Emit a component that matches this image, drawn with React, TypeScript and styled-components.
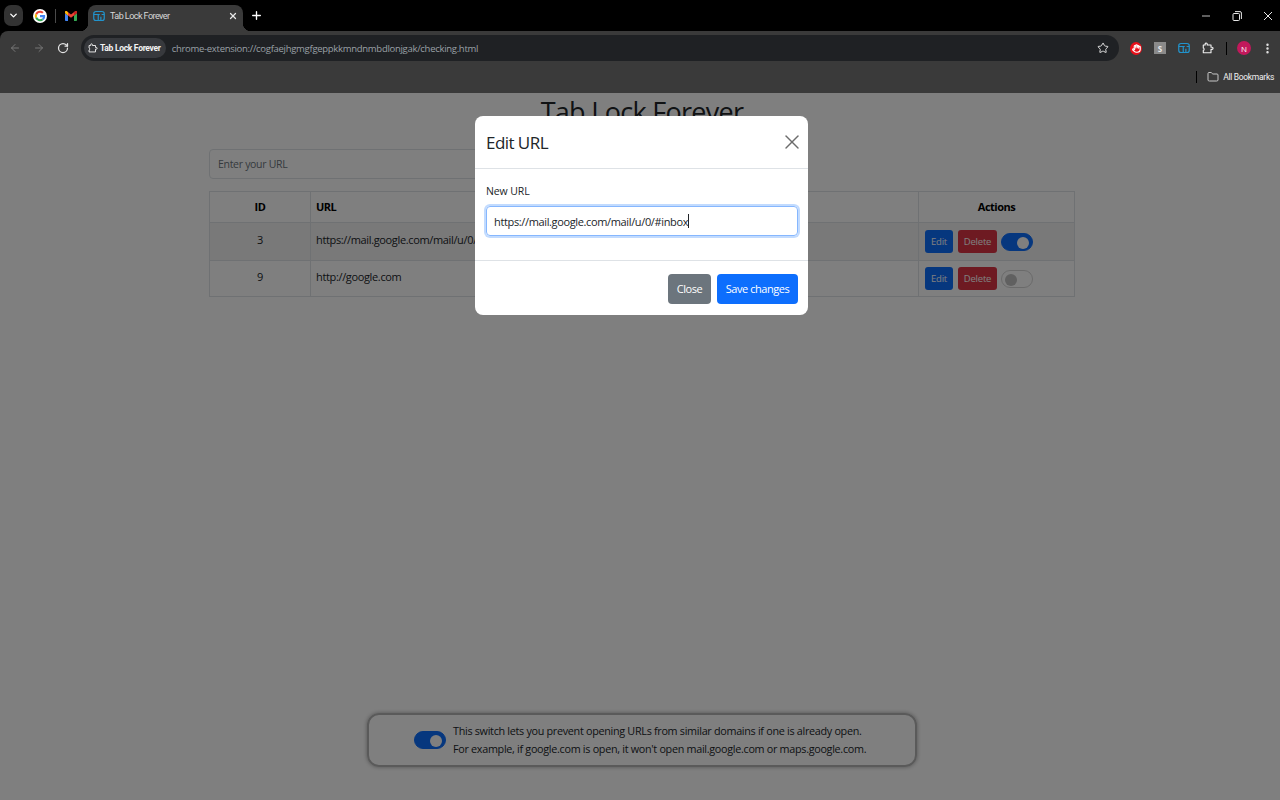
import React from 'react';
import styled, { createGlobalStyle } from 'styled-components';
import { ArrowLeft, ArrowRight, ChevronDown, Folder, Hand, MoreVertical, Plus, RotateCw, Star, X } from 'lucide-react';

const GlobalStyle = createGlobalStyle`
  html, body { margin: 0; padding: 0; height: 100%; }
  body { background: #000; font-family: "Open Sans", "Noto Sans", "Liberation Sans", sans-serif; color: #212529; overflow: hidden; }
  * { box-sizing: border-box; }
`;

const Shell = styled.div`
  width: 1280px;
  height: 800px;
  background: #000;
  display: flex;
  flex-direction: column;
`;

const TabStrip = styled.div`
  height: 31px;
  flex-shrink: 0;
  background: #000;
  display: flex;
  align-items: center;
  padding-left: 4px;
  color: #fff;
`;

const TabSearch = styled.div`
  width: 19px;
  height: 21px;
  border-radius: 7px;
  background: #333;
  display: flex;
  align-items: center;
  justify-content: center;
`;

const PinnedTab = styled.div<{ $flush?: boolean }>`
  width: 16px;
  height: 16px;
  margin-left: ${p => (p.$flush ? 0 : 9)}px;
  display: flex;
  align-items: center;
  justify-content: center;
`;

const TabDivider = styled.div`
  width: 1px;
  height: 14px;
  margin: 0 7px;
  background: #4a4a4a;
`;

const ActiveTab = styled.div`
  position: relative;
  width: 155px;
  height: 26px;
  margin: 5px 0 0 9px;
  padding: 0 5px 4px;
  border-radius: 8px 8px 0 0;
  background: #3a3a3a;
  display: flex;
  align-items: center;
  gap: 5px;

  &::before,
  &::after {
    content: '';
    position: absolute;
    bottom: 0;
    width: 8px;
    height: 8px;
  }
  &::before {
    left: -8px;
    background: radial-gradient(circle at 0 0, #000 8px, #3a3a3a 8.5px);
  }
  &::after {
    right: -8px;
    background: radial-gradient(circle at 100% 0, #000 8px, #3a3a3a 8.5px);
  }
`;

const TabTitle = styled.span`
  flex: 1;
  font-family: Roboto, "Open Sans", sans-serif;
  font-size: 9px;
  letter-spacing: -0.55px;
  color: #d8d8d8;
  white-space: nowrap;
`;

const NewTab = styled.div`
  margin-left: 7px;
  display: flex;
`;

const WindowControls = styled.div`
  margin-left: auto;
  display: flex;
  align-items: center;
  gap: 21px;
  padding-right: 7px;
`;

const Toolbar = styled.div`
  height: 34px;
  flex-shrink: 0;
  background: #3a3a3a;
  border-radius: 8px 0 0 0;
  display: flex;
  align-items: center;
  padding-left: 9px;
`;

const NavButton = styled.div<{ $dim?: boolean }>`
  width: 12px;
  height: 12px;
  margin-right: 12px;
  display: flex;
  color: ${p => (p.$dim ? '#777' : '#e6e6e6')};
`;

const Omnibox = styled.div`
  width: 1038px;
  height: 26px;
  padding: 0 10px 0 3px;
  border-radius: 13px;
  background: #1f2124;
  display: flex;
  align-items: center;
`;

const OriginChip = styled.div`
  height: 20px;
  padding: 0 5px 0 4px;
  border-radius: 10px;
  background: #37393d;
  display: flex;
  align-items: center;
  gap: 2px;
  color: #f2f2f2;
  font-family: Roboto, "Open Sans", sans-serif;
  font-size: 8.5px;
  font-weight: 700;
  letter-spacing: -0.3px;
  white-space: nowrap;
`;

const UrlText = styled.span`
  margin-left: 6px;
  flex: 1;
  font-size: 9.5px;
  letter-spacing: -0.29px;
  color: #9aa0a6;
  white-space: nowrap;
`;

const ExtensionTray = styled.div`
  display: flex;
  align-items: center;
  margin-left: 11px;
  gap: 12px;
`;

const StopIcon = styled.div`
  width: 12px;
  height: 13px;
  border-radius: 50%;
  background: #e8101a;
  display: flex;
  align-items: center;
  justify-content: center;
  color: #fff;
`;

const GreyBadge = styled.div`
  width: 12px;
  height: 12px;
  background: #8a8a8a;
  color: #e8e8e8;
  font-size: 8px;
  font-weight: 700;
  display: flex;
  align-items: center;
  justify-content: center;
`;

const TrayDivider = styled.div`
  width: 1px;
  height: 13px;
  background: #000;
`;

const Avatar = styled.div`
  width: 14px;
  height: 14px;
  margin: 0 -2px;
  border-radius: 50%;
  background: #c2185b;
  color: #fff;
  font-size: 8px;
  display: flex;
  align-items: center;
  justify-content: center;
`;

const BookmarkBar = styled.div`
  height: 28px;
  flex-shrink: 0;
  background: #3a3a3a;
  display: flex;
  align-items: center;
  justify-content: flex-end;
  padding: 0 6px 4px 0;
  gap: 4px;
  color: #f0f0f0;
  font-family: Roboto, "Open Sans", sans-serif;
  font-size: 8.5px;
  letter-spacing: -0.3px;
`;

const BookmarkDivider = styled.div`
  width: 1px;
  height: 12px;
  margin-right: 6px;
  background: #000;
`;

const Page = styled.main`
  position: relative;
  flex: 1;
  padding-left: 4px;
  display: flex;
  flex-direction: column;
  align-items: center;
  background: #fff;
`;

const Title = styled.h1`
  margin: 0;
  height: 56px;
  font-size: 27px;
  line-height: 38px;
  font-weight: 500;
  letter-spacing: -0.7px;
`;

const FormRow = styled.div`
  width: 866px;
  display: flex;
`;

const UrlInput = styled.input`
  width: 540px;
  height: 30px;
  padding: 0 8px;
  border: 1px solid #dee2e6;
  border-radius: 4px;
  font: inherit;
  font-size: 10.5px;
  letter-spacing: -0.3px;
  outline: none;
  &::placeholder { color: #6c757d; }
`;

const Table = styled.table`
  width: 866px;
  margin-top: 12px;
  border-collapse: collapse;
  table-layout: fixed;
  font-size: 11px;
  letter-spacing: -0.35px;
`;

const Col = styled.col<{ $width?: number }>`
  width: ${p => (p.$width ? `${p.$width}px` : 'auto')};
`;

const Th = styled.th<{ $left?: boolean }>`
  height: 31px;
  padding: 0 ${p => (p.$left ? 5 : 6)}px 1px;
  border: 1px solid #dee2e6;
  text-align: ${p => (p.$left ? 'left' : 'center')};
  color: #000;
  font-weight: 700;
  letter-spacing: -0.5px;
`;

const Row = styled.tr<{ $striped?: boolean }>`
  background: ${p => (p.$striped ? '#f2f2f2' : '#fff')};
`;

const Td = styled.td<{ $left?: boolean; $tall?: boolean; $text?: boolean }>`
  height: ${p => (p.$tall ? 38 : 36)}px;
  padding: 0 ${p => (p.$left ? 5 : 6)}px ${p => (p.$text ? 4 : 0)}px;
  border: 1px solid #dee2e6;
  text-align: ${p => (p.$left ? 'left' : 'center')};
  white-space: nowrap;
  overflow: hidden;
`;

const Actions = styled.div`
  display: flex;
  align-items: center;
  gap: 5px;
`;

const SmallButton = styled.button<{ $danger?: boolean }>`
  height: 23px;
  width: ${p => (p.$danger ? 39 : 28)}px;
  padding: 0;
  border: none;
  border-radius: 3px;
  background: ${p => (p.$danger ? '#dc3545' : '#0d6efd')};
  color: #fff;
  font: inherit;
  font-size: 9.5px;
  letter-spacing: -0.2px;
`;

const Switch = styled.span<{ $on?: boolean }>`
  width: 32px;
  height: 18px;
  margin-left: -1px;
  padding: 3px;
  border-radius: 9px;
  border: 1px solid ${p => (p.$on ? '#0d6efd' : '#d5d5d5')};
  background: ${p => (p.$on ? '#0d6efd' : '#fff')};
  display: flex;
  justify-content: ${p => (p.$on ? 'flex-end' : 'flex-start')};
  flex-shrink: 0;
  &::after {
    content: '';
    width: 12px;
    height: 12px;
    border-radius: 50%;
    background: ${p => (p.$on ? '#fff' : '#c0c0c0')};
  }
`;

const Notice = styled.div`
  margin-top: auto;
  margin-bottom: 33px;
  width: 550px;
  height: 54px;
  border: 2px solid #b5b5b5;
  border-radius: 12px;
  box-shadow: 0 0 4px rgba(0, 0, 0, 0.35);
  display: flex;
  align-items: center;
  padding-left: 46px;
  gap: 7px;
  font-size: 10.8px;
  letter-spacing: -0.3px;
  line-height: 18px;
`;

const Backdrop = styled.div`
  position: absolute;
  inset: 0;
  background: rgba(0, 0, 0, 0.5);
`;

const Modal = styled.div`
  position: absolute;
  top: 23px;
  left: 475px;
  width: 333px;
  height: 199px;
  border-radius: 8px;
  background: #fff;
  display: flex;
  flex-direction: column;
`;

const ModalHeader = styled.div`
  height: 53px;
  padding: 0 4px 0 11px;
  border-bottom: 1px solid #dee2e6;
  display: flex;
  align-items: center;
  justify-content: space-between;
  font-size: 17px;
  font-weight: 500;
  letter-spacing: -0.55px;
`;

const ModalBody = styled.div`
  height: 92px;
  padding: 15px 10px 0 11px;
  border-bottom: 1px solid #dee2e6;
  font-size: 10.5px;
  letter-spacing: -0.1px;
`;

const FieldLabel = styled.div`
  margin-bottom: 8px;
  line-height: 14px;
`;

const FocusField = styled.div`
  height: 30px;
  padding: 0 7px;
  border: 1px solid #86b7fe;
  border-radius: 4px;
  box-shadow: 0 0 0 2px rgba(13, 110, 253, 0.25);
  display: flex;
  align-items: center;
  font-size: 11px;
  letter-spacing: -0.36px;
  white-space: nowrap;
`;

const Caret = styled.span`
  width: 1px;
  height: 14px;
  background: #212529;
`;

const ModalFooter = styled.div`
  flex: 1;
  padding: 1px 10px 0 0;
  display: flex;
  align-items: center;
  justify-content: flex-end;
  gap: 6px;
`;

const FooterButton = styled.button<{ $primary?: boolean }>`
  height: 30px;
  width: ${p => (p.$primary ? 81 : 43)}px;
  padding: 0;
  border: none;
  border-radius: 4px;
  background: ${p => (p.$primary ? '#0d6efd' : '#6c757d')};
  color: #fff;
  font: inherit;
  font-size: 11px;
  letter-spacing: -0.45px;
`;

const GoogleIcon = () => (
  <svg width="14" height="14" viewBox="0 0 48 48">
    <circle cx="24" cy="24" r="24" fill="#fff" />
    <path fill="#ea4335" d="M24 13c3 0 5.400 1 7.300 2.800l5-5C33.300 7.900 29 6 24 6 17 6 11 10 8.100 15.900l5.900 4.500C15.400 16 19.300 13 24 13z" />
    <path fill="#4285f4" d="M41.600 24.500c0-1.300-.1-2.500-.3-3.600H24v7h9.900c-.4 2.300-1.700 4.200-3.700 5.500l5.700 4.400c3.400-3.100 5.700-7.700 5.700-13.300z" />
    <path fill="#fbbc05" d="M14 27.600c-.4-1.100-.6-2.300-.6-3.600s.2-2.500.6-3.600l-5.900-4.500C6.800 18.300 6 21 6 24s.8 5.700 2.100 8.100z" />
    <path fill="#34a853" d="M24 42c4.900 0 9-1.600 11.900-4.400l-5.700-4.400c-1.600 1.100-3.700 1.700-6.200 1.700-4.700 0-8.600-3-10-7.300l-5.900 4.500C11 37.900 17 42 24 42z" />
  </svg>
);

const GmailIcon = () => (
  <svg width="12" height="10" viewBox="0 0 24 20">
    <path fill="#4285f4" d="M0 4v14.500C0 19.300.7 20 1.500 20H6V9z" />
    <path fill="#34a853" d="M24 4v14.500c0 .8-.7 1.500-1.500 1.500H18V9z" />
    <path fill="#ea4335" d="M0 2.500C0 .5 2.200-.7 3.800.5L12 7l8.200-6.500C21.800-.7 24 .5 24 2.500V4l-6 5-6 4.500L6 9 0 4z" />
    <path fill="#fbbc05" d="M0 2.500V4l6 5V3L3.800.5C2.200-.7 0 .5 0 2.500z" />
    <path fill="#c5221f" d="M18 3v6l6-5V2.500c0-2-2.200-3.200-3.800-2z" />
  </svg>
);

const LockFavicon = () => (
  <svg width="12" height="12" viewBox="0 0 16 16" fill="none" stroke="#2293cc" strokeWidth="1.600">
    <rect x="1" y="2" width="14" height="12" rx="3" />
    <path d="M1 6h8M11.500 6h3.500M7 6v8M10.500 9v5" />
  </svg>
);

const ExtensionIcon = ({ size }: { size: number }) => (
  <svg width={size} height={size} viewBox="0 0 14 14" fill="none" stroke="#f0f0f0" strokeWidth="1.300" strokeLinejoin="round">
    <path d="M1.500 3.500h2.200V2.300a1.200 1.200 0 0 1 2.400 0v1.200h4.400v2.700h1.200a1.200 1.200 0 0 1 0 2.400h-1.200v3.900H1.500V9.800c1.300-.2 1.300-2.600 0-2.800z" />
  </svg>
);

const RestoreIcon = () => (
  <svg width="10" height="10" viewBox="0 0 10 10" fill="none" stroke="#e6e6e6">
    <rect x="1" y="2.500" width="6.500" height="7" rx="1" />
    <path d="M3 .6h5a1.400 1.400 0 0 1 1.400 1.400v6" />
  </svg>
);

const MinimizeIcon = () => (
  <svg width="10" height="10" viewBox="0 0 10 10" stroke="#bdbdbd">
    <path d="M1 5h8" />
  </svg>
);

const CloseIcon = () => (
  <svg width="10" height="10" viewBox="0 0 10 10" stroke="#e6e6e6">
    <path d="M1 1l8 8M9 1l-8 8" />
  </svg>
);

const rows = [
  { id: 3, url: 'https://mail.google.com/mail/u/0/#inbox', locked: true },
  { id: 9, url: 'http://google.com', locked: false },
];

const App: React.FC = () => {
  return (
    <Shell>
      <GlobalStyle />
      <TabStrip>
        <TabSearch>
          <ChevronDown size={11} strokeWidth={3} />
        </TabSearch>
        <PinnedTab>
          <GoogleIcon />
        </PinnedTab>
        <TabDivider />
        <PinnedTab $flush>
          <GmailIcon />
        </PinnedTab>
        <ActiveTab>
          <LockFavicon />
          <TabTitle>Tab Lock Forever</TabTitle>
          <X size={10} strokeWidth={3} color="#e6e6e6" />
        </ActiveTab>
        <NewTab>
          <Plus size={13} strokeWidth={2.5} />
        </NewTab>
        <WindowControls>
          <MinimizeIcon />
          <RestoreIcon />
          <CloseIcon />
        </WindowControls>
      </TabStrip>
      <Toolbar>
        <NavButton $dim>
          <ArrowLeft size={12} />
        </NavButton>
        <NavButton $dim>
          <ArrowRight size={12} />
        </NavButton>
        <NavButton>
          <RotateCw size={12} strokeWidth={2.5} />
        </NavButton>
        <Omnibox>
          <OriginChip>
            <ExtensionIcon size={10} />
            Tab Lock Forever
          </OriginChip>
          <UrlText>chrome-extension://cogfaejhgmgfgeppkkmndnmbdlonjgak/checking.html</UrlText>
          <Star size={12} color="#e0e0e0" strokeWidth={2} />
        </Omnibox>
        <ExtensionTray>
          <StopIcon>
            <Hand size={9} strokeWidth={3} />
          </StopIcon>
          <GreyBadge>S</GreyBadge>
          <LockFavicon />
          <ExtensionIcon size={12} />
          <TrayDivider />
          <Avatar>N</Avatar>
          <MoreVertical size={13} color="#e6e6e6" strokeWidth={2.5} />
        </ExtensionTray>
      </Toolbar>
      <BookmarkBar>
        <BookmarkDivider />
        <Folder size={12} color="#c8c8c8" />
        All Bookmarks
      </BookmarkBar>
      <Page>
        <Title>Tab Lock Forever</Title>
        <FormRow>
          <UrlInput placeholder="Enter your URL" readOnly />
        </FormRow>
        <Table>
          <colgroup>
            <Col $width={101} />
            <Col />
            <Col $width={156} />
          </colgroup>
          <thead>
            <tr>
              <Th>ID</Th>
              <Th $left>URL</Th>
              <Th>Actions</Th>
            </tr>
          </thead>
          <tbody>
            {rows.map((row, i) => (
              <Row key={row.id} $striped={i === 0}>
                <Td $text $tall={i === 0}>{row.id}</Td>
                <Td $text $left $tall={i === 0}>{row.url}</Td>
                <Td $tall={i === 0}>
                  <Actions>
                    <SmallButton>Edit</SmallButton>
                    <SmallButton $danger>Delete</SmallButton>
                    <Switch $on={row.locked} />
                  </Actions>
                </Td>
              </Row>
            ))}
          </tbody>
        </Table>
        <Notice>
          <Switch $on />
          <div>
            This switch lets you prevent opening URLs from similar domains if one is already open.
            <br />
            For example, if google.com is open, it won't open mail.google.com or maps.google.com.
          </div>
        </Notice>
        <Backdrop />
        <Modal>
          <ModalHeader>
            Edit URL
            <X size={24} strokeWidth={1.4} color="#6c6c6c" />
          </ModalHeader>
          <ModalBody>
            <FieldLabel>New URL</FieldLabel>
            <FocusField>
              https://mail.google.com/mail/u/0/#inbox
              <Caret />
            </FocusField>
          </ModalBody>
          <ModalFooter>
            <FooterButton>Close</FooterButton>
            <FooterButton $primary>Save changes</FooterButton>
          </ModalFooter>
        </Modal>
      </Page>
    </Shell>
  );
};

export default App;
